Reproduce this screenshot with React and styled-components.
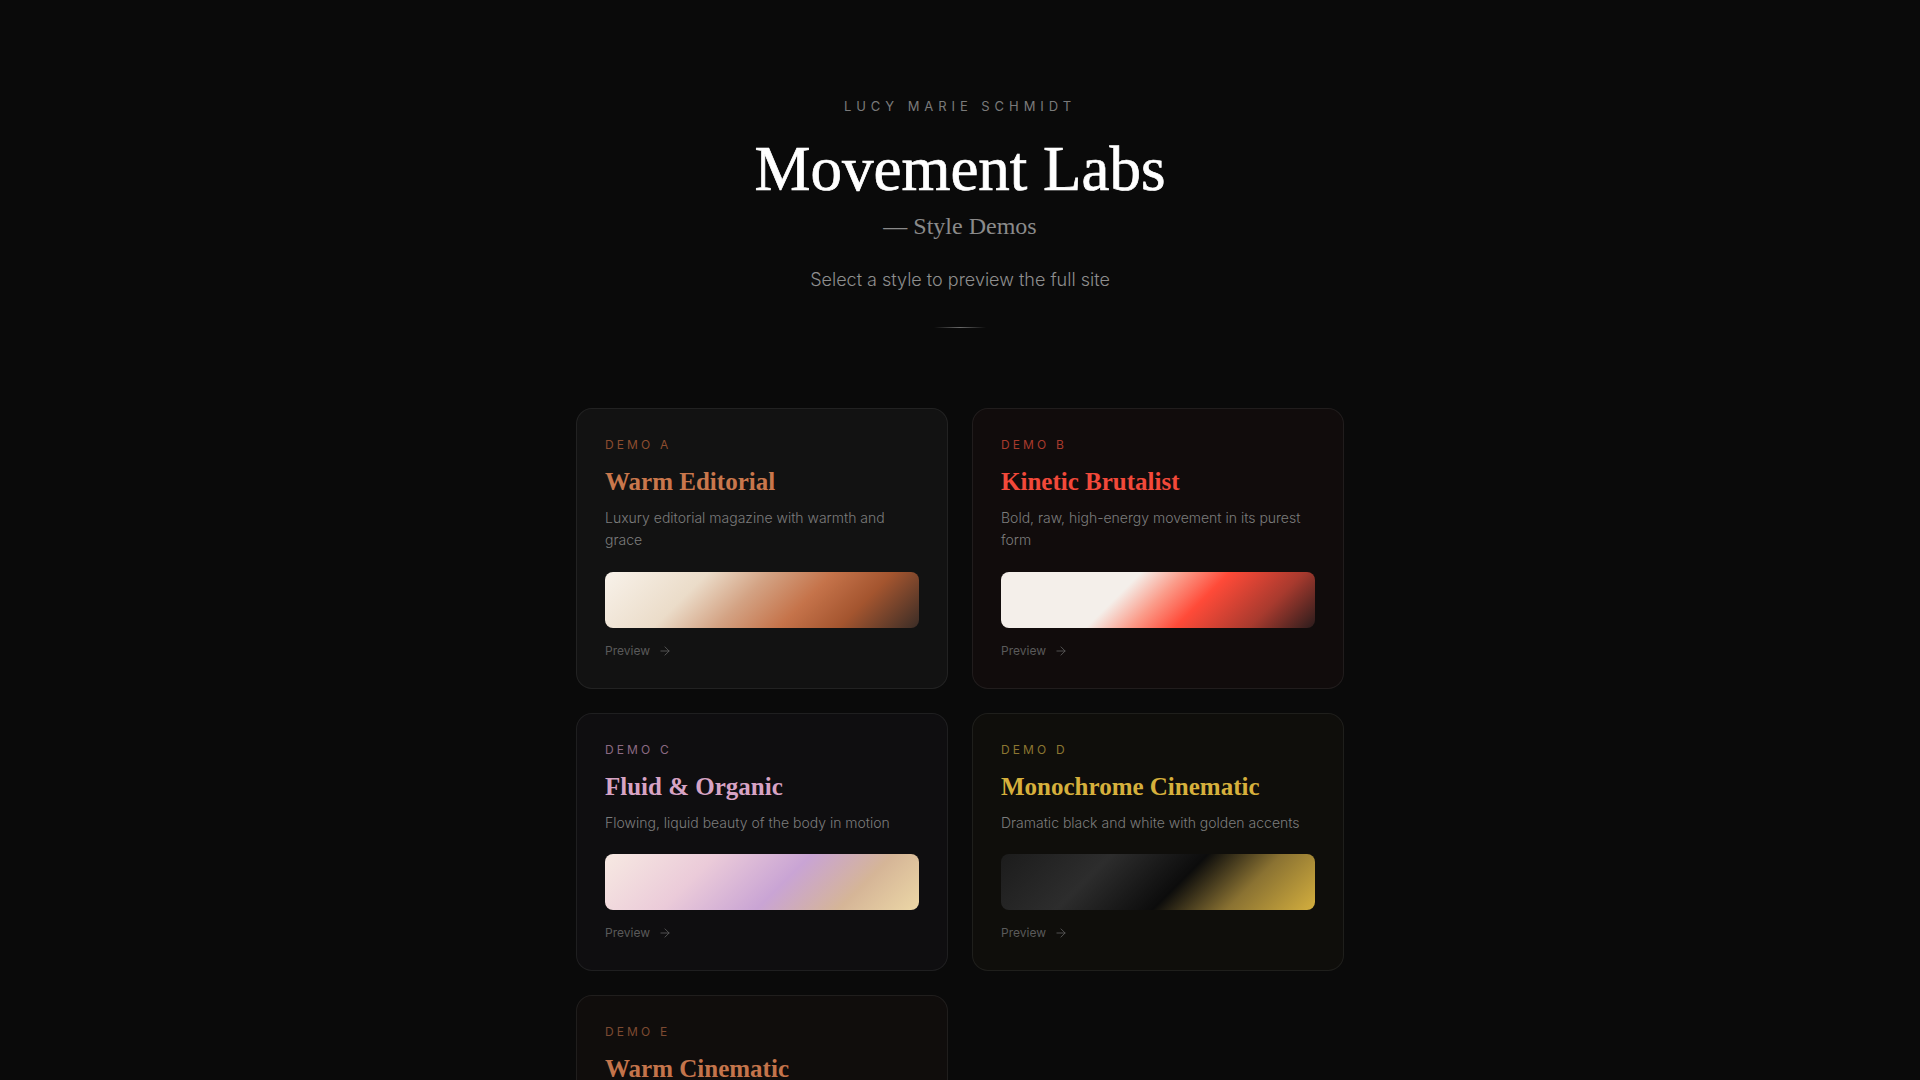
import React from "react";
import styled, { createGlobalStyle } from "styled-components";
import { ArrowRight } from "lucide-react";

const demos = [
  {
    id: "A",
    title: "Warm Editorial",
    text: "Luxury editorial magazine with warmth and grace",
    label: "#8d4d2f",
    accent: "#c9774c",
    surface: "#121212",
    swatch:
      "linear-gradient(135deg, #f8f2ea 0%, #ebdcc9 28%, #d3a283 45%, #c5734a 62%, #a4552f 78%, #3a2c26 100%)",
  },
  {
    id: "B",
    title: "Kinetic Brutalist",
    text: "Bold, raw, high-energy movement in its purest form",
    label: "#a83a2c",
    accent: "#f2493a",
    surface: "#110c0c",
    swatch:
      "linear-gradient(135deg, #f4efea 0%, #f4efea 38%, #fb9a88 50%, #ff4a38 62%, #a83a2e 82%, #2a1c1c 100%)",
  },
  {
    id: "C",
    title: "Fluid & Organic",
    text: "Flowing, liquid beauty of the body in motion",
    label: "#8c6a82",
    accent: "#d7a3c4",
    surface: "#0f0e10",
    swatch:
      "linear-gradient(135deg, #f7e9e2 0%, #ebcbd9 30%, #c9a4d4 56%, #d5b597 78%, #ecd7a6 100%)",
  },
  {
    id: "D",
    title: "Monochrome Cinematic",
    text: "Dramatic black and white with golden accents",
    label: "#8c7631",
    accent: "#d6b03c",
    surface: "#0f0e0b",
    swatch:
      "linear-gradient(135deg, #1c1c1c 0%, #2d2d2d 30%, #0c0c0c 56%, #8a7232 76%, #d4af3e 100%)",
  },
  {
    id: "E",
    title: "Warm Cinematic",
    text: "Golden hour warmth with a cinematic glow",
    label: "#7d4a31",
    accent: "#c4744b",
    surface: "#100d0c",
    swatch:
      "linear-gradient(135deg, #f3e4cf 0%, #d69a68 40%, #a9542f 75%, #2a1c16 100%)",
  },
];

const GlobalStyle = createGlobalStyle`
  * {
    box-sizing: border-box;
  }
  body {
    margin: 0;
    background: #0a0a0a;
    color: #fff;
    font-family: Inter, "Liberation Sans", sans-serif;
    -webkit-font-smoothing: antialiased;
  }
`;

export default function App() {
  return (
    <>
      <GlobalStyle />
      <Page>
        <Header>
          <Eyebrow>Lucy Marie Schmidt</Eyebrow>
          <Title>Movement Labs</Title>
          <Subtitle>— Style Demos</Subtitle>
          <Lead>Select a style to preview the full site</Lead>
          <Divider />
        </Header>
        <Grid>
          {demos.map((d) => (
            <Card key={d.id} $surface={d.surface}>
              <CardLabel $color={d.label}>Demo {d.id}</CardLabel>
              <CardTitle $color={d.accent}>{d.title}</CardTitle>
              <CardText>{d.text}</CardText>
              <Swatch $bg={d.swatch} />
              <PreviewLink>
                Preview
                <ArrowRight size={14} strokeWidth={1.5} />
              </PreviewLink>
            </Card>
          ))}
        </Grid>
      </Page>
    </>
  );
}

const Page = styled.main`
  min-height: 100vh;
  padding: 96px 24px 96px;
  background: #0a0a0a;
`;

const Header = styled.header`
  display: flex;
  flex-direction: column;
  align-items: center;
  text-align: center;
  margin-bottom: 80px;
`;

const Eyebrow = styled.p`
  margin: 0;
  font-size: 13px;
  line-height: 20px;
  letter-spacing: 0.38em;
  text-transform: uppercase;
  color: #7a7a7a;
`;

const Title = styled.h1`
  margin: 19px 0 0;
  font-family: "Liberation Serif", "DejaVu Serif", serif;
  font-weight: 400;
  font-size: 63px;
  line-height: 68px;
  color: #ffffff;
  -webkit-text-stroke: 0.7px #ffffff;
`;

const Subtitle = styled.p`
  margin: 8px 0 0;
  font-family: "Liberation Serif", "DejaVu Serif", serif;
  font-size: 24px;
  line-height: 31px;
  color: #8a8a8a;
`;

const Lead = styled.p`
  margin: 24px 0 0;
  font-size: 18px;
  font-weight: 300;
  line-height: 28px;
  color: #8e8e8e;
`;

const Divider = styled.span`
  display: block;
  width: 52px;
  height: 1px;
  margin-top: 33px;
  background: linear-gradient(90deg, transparent, #6a6a6a, transparent);
`;

const Grid = styled.section`
  max-width: 768px;
  margin: 0 auto;
  display: grid;
  grid-template-columns: repeat(2, 1fr);
  gap: 24px;
  align-items: start;
`;

const Card = styled.article`
  display: flex;
  flex-direction: column;
  padding: 28px;
  border-radius: 16px;
  border: 1px solid rgba(255, 255, 255, 0.07);
  background: ${(p) => p.$surface};
`;

const CardLabel = styled.span`
  font-size: 12px;
  line-height: 16px;
  letter-spacing: 0.26em;
  text-transform: uppercase;
  color: ${(p) => p.$color};
`;

const CardTitle = styled.h2`
  margin: 12px 0 0;
  font-family: "Liberation Serif", "DejaVu Serif", serif;
  font-weight: 700;
  font-size: 25px;
  line-height: 34px;
  color: ${(p) => p.$color};
`;

const CardText = styled.p`
  margin: 8px 0 0;
  font-size: 14px;
  font-weight: 300;
  line-height: 22.4px;
  color: #7c7c7c;
`;

const Swatch = styled.div`
  margin-top: 20px;
  height: 56px;
  border-radius: 8px;
  background: ${(p) => p.$bg};
`;

const PreviewLink = styled.span`
  margin-top: 14px;
  display: inline-flex;
  align-items: center;
  gap: 8px;
  font-size: 12px;
  line-height: 18px;
  color: #5a5a5a;

  svg {
    color: #5a5a5a;
  }
`;
